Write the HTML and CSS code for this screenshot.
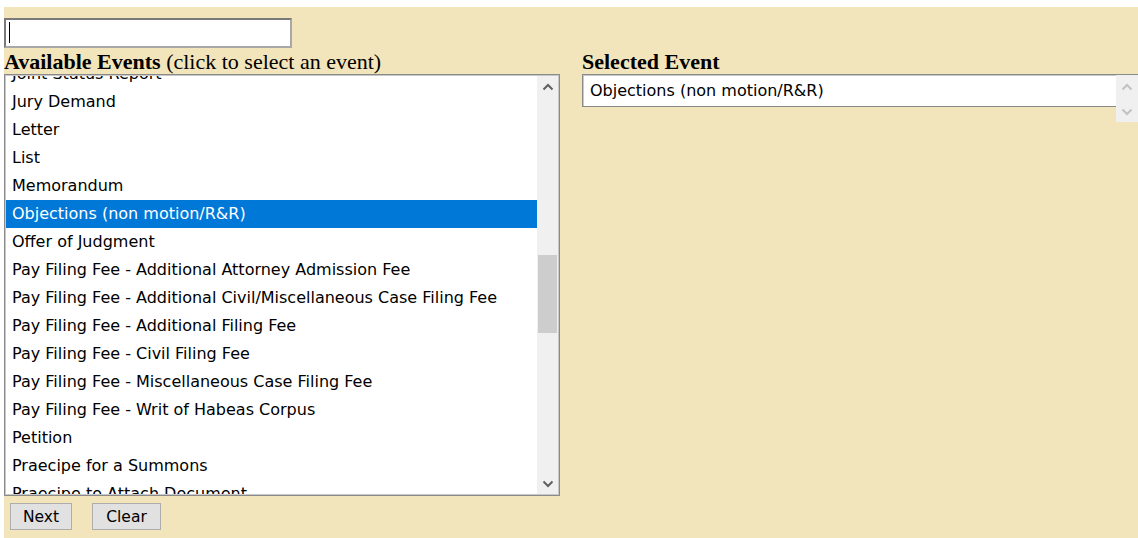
FILE: index.html
```html
<!DOCTYPE html>
<html lang="en">
<head>
<meta charset="utf-8">
<title>Event Selection</title>
<link rel="stylesheet" href="styles.css">
</head>
<body>
<div class="page">
  <div class="search-wrap">
    <input class="search" type="text" aria-label="Filter events">
    <span class="caret"></span>
  </div>
  <div class="columns">
    <div class="col-left">
      <div class="heading"><b>Available Events</b> (click to select an event)</div>
      <div class="listbox">
        <div class="viewport">
          <ul class="items">
            <li>Joint Status Report</li>
            <li>Jury Demand</li>
            <li>Letter</li>
            <li>List</li>
            <li>Memorandum</li>
            <li class="active">Objections (non motion/R&amp;R)</li>
            <li>Offer of Judgment</li>
            <li>Pay Filing Fee - Additional Attorney Admission Fee</li>
            <li>Pay Filing Fee - Additional Civil/Miscellaneous Case Filing Fee</li>
            <li>Pay Filing Fee - Additional Filing Fee</li>
            <li>Pay Filing Fee - Civil Filing Fee</li>
            <li>Pay Filing Fee - Miscellaneous Case Filing Fee</li>
            <li>Pay Filing Fee - Writ of Habeas Corpus</li>
            <li>Petition</li>
            <li>Praecipe for a Summons</li>
            <li>Praecipe to Attach Document</li>
          </ul>
        </div>
        <div class="scrollbar">
          <div class="arrow">
            <svg width="12" height="8" viewBox="0 0 12 8"><path d="M1.5 6.5 L6 2 L10.5 6.5" fill="none" stroke="#606060" stroke-width="2"/></svg>
          </div>
          <div class="track"><div class="thumb"></div></div>
          <div class="arrow">
            <svg width="12" height="8" viewBox="0 0 12 8"><path d="M1.5 1.5 L6 6 L10.5 1.5" fill="none" stroke="#606060" stroke-width="2"/></svg>
          </div>
        </div>
      </div>
      <div class="buttons">
        <button class="btn btn-next" type="button">Next</button>
        <button class="btn btn-clear" type="button">Clear</button>
      </div>
    </div>
    <div class="col-right">
      <div class="heading"><b>Selected Event</b></div>
      <div class="selected-box">
        <div class="selected-text">Objections (non motion/R&amp;R)</div>
        <div class="selected-scroll">
          <svg width="12" height="8" viewBox="0 0 12 8"><path d="M1.5 6.5 L6 2 L10.5 6.5" fill="none" stroke="#c2c2c2" stroke-width="2"/></svg>
          <svg width="12" height="8" viewBox="0 0 12 8"><path d="M1.5 1.5 L6 6 L10.5 1.5" fill="none" stroke="#c2c2c2" stroke-width="2"/></svg>
        </div>
      </div>
    </div>
  </div>
</div>
</body>
</html>
```

FILE: styles.css
```css
html, body {
  margin: 0;
  padding: 0;
  background: #ffffff;
  height: 100%;
  overflow: hidden;
}

.page {
  margin: 7px 0 0 4px;
  background: #f3e5bb;
  min-height: calc(100% - 7px);
  padding-top: 11px;
  box-sizing: border-box;
  font-family: "Liberation Serif", "Times New Roman", serif;
  color: #000;
}

/* filter input with its caret */
.search-wrap {
  position: relative;
  width: 288px;
  height: 30px;
}

.search {
  display: block;
  width: 288px;
  height: 30px;
  box-sizing: border-box;
  margin: 0;
  border: 2px solid #8a8a8a;
  border-color: #7a7a7a #a8a8a8 #a8a8a8 #7a7a7a;
  background: #fff;
  caret-color: transparent;
  outline: none;
}

.caret {
  position: absolute;
  left: 5px;
  top: 4px;
  width: 1px;
  height: 21px;
  background: #000;
}

.columns {
  display: flex;
  align-items: flex-start;
}

.col-left {
  width: 556px;
  flex: none;
}

.col-right {
  flex: 1;
  margin-left: 22px;
}

.heading {
  font-size: 22px;
  line-height: 28px;
  height: 26px;
  white-space: nowrap;
}

.heading b {
  font-weight: bold;
}

/* available events list */
.listbox {
  display: flex;
  height: 422px;
  box-sizing: border-box;
  border: 1px solid #8a8a8a;
  box-shadow: inset 0 0 0 1px #c8c8c8;
  background: #fff;
  padding: 1px;
}

.viewport {
  flex: 1;
  overflow: hidden;
}

.items {
  list-style: none;
  margin: -16px 0 0 0;
  padding: 0;
  font-family: "DejaVu Sans", Verdana, sans-serif;
  font-size: 16px;
}

.items li {
  height: 28px;
  line-height: 28px;
  padding-left: 6px;
  white-space: nowrap;
  color: #000;
}

.items li.active {
  background: #0078d7;
  color: #fff;
}

.scrollbar {
  width: 21px;
  flex: none;
  display: flex;
  flex-direction: column;
  background: #f0f0f0;
}

.arrow {
  height: 21px;
  display: flex;
  align-items: center;
  justify-content: center;
  flex: none;
}

.track {
  flex: 1;
  padding: 0 1px;
}

.thumb {
  margin-top: 158px;
  height: 78px;
  background: #cdcdcd;
}

/* action buttons */
.buttons {
  display: flex;
  gap: 20px;
  padding: 7px 0 0 6px;
}

.btn {
  height: 27px;
  box-sizing: border-box;
  border: 1px solid #adadad;
  background: #e1e1e1;
  font-family: "DejaVu Sans", Verdana, sans-serif;
  font-size: 15.5px;
  color: #000;
  padding: 0;
  margin: 0;
}

.btn-next { width: 62px; }
.btn-clear { width: 69px; }

/* selected event field */
.selected-box {
  display: flex;
  align-items: flex-start;
  height: 33px;
  box-sizing: border-box;
  border: 1px solid #8a8a8a;
  border-right: none;
  box-shadow: inset 0 1px 0 #c8c8c8, inset 1px 0 0 #c8c8c8;
  background: #fff;
}

.selected-text {
  flex: 1;
  font-family: "DejaVu Sans", Verdana, sans-serif;
  font-size: 16px;
  line-height: 31px;
  padding-left: 7px;
  white-space: nowrap;
}

.selected-scroll {
  width: 22px;
  height: 47px;
  flex: none;
  background: #f0f0f0;
  display: flex;
  flex-direction: column;
  align-items: center;
  justify-content: space-between;
  padding: 8px 0 6px;
  box-sizing: border-box;
}
```
